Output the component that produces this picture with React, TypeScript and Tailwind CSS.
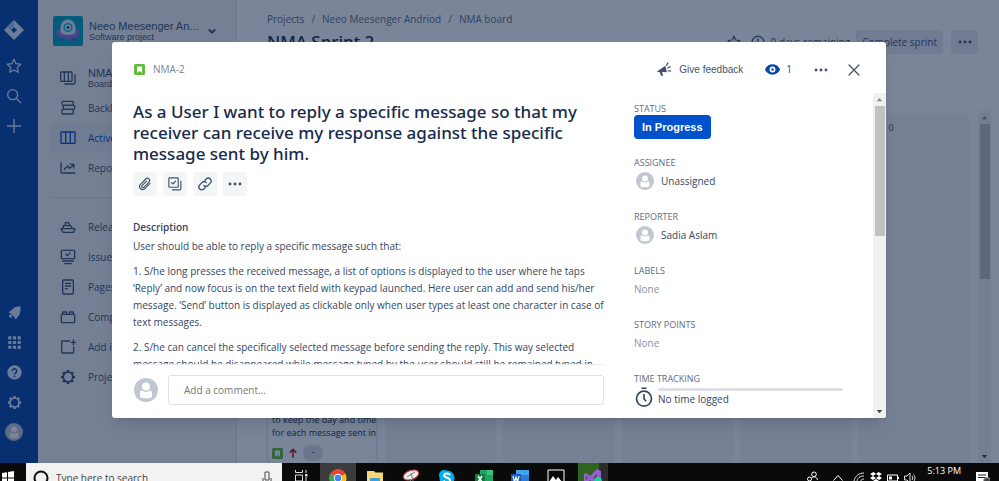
import type { ReactNode } from "react";

const stroke = {
  fill: "none",
  stroke: "currentColor",
  strokeWidth: 2,
  strokeLinecap: "round",
  strokeLinejoin: "round",
} as const;

const icons: Record<string, ReactNode> = {
  board: (
    <g {...stroke}>
      <rect x="1" y="3" width="17" height="14" rx="1" />
      <path d="M6.500 3v14M12.500 3v14M22.500 7v12a2 2 0 0 1-2 2H7" />
    </g>
  ),
  backlog: (
    <g {...stroke}>
      <rect x="3" y="2" width="17" height="6" rx="1.500" />
      <rect x="5" y="8" width="17" height="6" rx="1.500" />
      <rect x="3" y="14" width="17" height="7" rx="1.500" />
    </g>
  ),
  columns: (
    <g {...stroke}>
      <rect x="1.500" y="3" width="21" height="17" rx="1" />
      <path d="M8.500 3v17M15.500 3v17" />
    </g>
  ),
  reports: (
    <g {...stroke}>
      <path d="M1.500 4v14a1.500 1.500 0 0 0 1.500 1.500h19.500" />
      <path d="m6.500 14 5-5 3 3.500L20.500 7M15.500 6.500h5.300V12" />
    </g>
  ),
  ship: (
    <g {...stroke}>
      <path d="M1.500 14.500h21l-2 5.500H4.500zM5 14v-4h11l2.500 4M8 10V5.500h5l2 4.500" />
    </g>
  ),
  issues: (
    <g {...stroke}>
      <rect x="2" y="2" width="20" height="12.500" rx="1" />
      <path d="m9 8 2 2 4-4M4 18h16M7 22h10" />
    </g>
  ),
  page: (
    <g {...stroke}>
      <rect x="4" y="1.500" width="16" height="21" rx="1.500" />
      <path d="M8 6.500h8M8 10.500h8M8 14.500h3" />
    </g>
  ),
  component: (
    <g {...stroke}>
      <rect x="2" y="8" width="20" height="12.500" rx="1.500" />
      <path d="M4 8V5.500a1 1 0 0 1 1-1h4a1 1 0 0 1 1 1V8M14 8V5.500a1 1 0 0 1 1-1h4a1 1 0 0 1 1 1V8" />
    </g>
  ),
  addItem: (
    <g {...stroke}>
      <path d="M14 3H3.500a1 1 0 0 0-1 1v16a1 1 0 0 0 1 1h16a1 1 0 0 0 1-1v-8M20 1.500v7M16.500 5h7" />
    </g>
  ),
  gear: (
    <g>
      <circle cx="12" cy="12" r="7.200" fill="none" stroke="currentColor" strokeWidth="2.600" />
      <path
        d="M10 1.500h4V5h-4zM10 19h4v3.500h-4zM1.500 10H5v4H1.500zM19 10h3.500v4H19zM3.200 6l2.800-2.800L8.500 5.600 5.600 8.500zM15.500 5.600 18 3.200 20.800 6l-2.400 2.500zM3.200 18l2.400-2.500 2.900 2.900L6 20.800zM15.500 18.400l2.900-2.900 2.400 2.500-2.800 2.800z"
        fill="currentColor"
      />
    </g>
  ),
  star: (
    <path
      d="m12 2 3.100 6.500 7 .9-5.100 4.900 1.300 7.100L12 18l-6.300 3.400L7 14.300 1.900 9.400l7-.9z"
      {...stroke}
    />
  ),
  search: (
    <g {...stroke}>
      <circle cx="10" cy="10" r="7.500" />
      <path d="m16 16 6 6" />
    </g>
  ),
  plus: <path d="M12 1.500v21M1.500 12h21" {...stroke} strokeLinecap="butt" />,
  rocket: (
    <g fill="currentColor">
      <path d="M21.500 2C15.500 2 12 3.500 9 6.500L2.500 12l3.700 1.500 5 5L12.500 22l2 .5 5-6.500c2-4 2.500-9 2-14z" />
      <circle cx="6" cy="17.500" r="2.800" />
    </g>
  ),
  apps: (
    <path
      d="M2 2h5v5H2zM9.500 2h5v5h-5zM17 2h5v5h-5zM2 9.500h5v5H2zM9.500 9.500h5v5h-5zM17 9.500h5v5h-5zM2 17h5v5H2zM9.500 17h5v5h-5zM17 17h5v5h-5z"
      fill="currentColor"
    />
  ),
  help: (
    <g>
      <circle cx="12" cy="12" r="11.500" fill="currentColor" />
      <path d="M8.500 9.500a3.500 3.500 0 1 1 5.300 3c-1.200.7-1.800 1.300-1.800 2.500" fill="none" stroke="#0747a6" strokeWidth="2.200" />
      <circle cx="12" cy="18" r="1.400" fill="#0747a6" />
    </g>
  ),
  chevron: <path d="m8 10.500 4 4 4-4" {...stroke} strokeWidth="3" />,
  more: (
    <g fill="currentColor">
      <circle cx="3.500" cy="12" r="2.500" />
      <circle cx="12" cy="12" r="2.500" />
      <circle cx="20.500" cy="12" r="2.500" />
    </g>
  ),
  close: <path d="m3.500 3.500 17 17M20.500 3.500l-17 17" {...stroke} strokeWidth="2.200" />,
  clip: (
    <path
      d="m20.500 11-8.700 9a5.200 5.200 0 0 1-7.500-7.300l9-9.300a3.800 3.800 0 0 1 5.500 5.300l-8.800 9a2 2 0 0 1-3-2.800l7.500-7.700"
      {...stroke}
    />
  ),
  subtask: (
    <g {...stroke}>
      <rect x="1.500" y="1.500" width="16" height="16" rx="1" />
      <path d="m6 9.500 2.500 2.500L13 7M22 7v13a2 2 0 0 1-2 2H7.500" />
    </g>
  ),
  link: (
    <g {...stroke} strokeWidth="2.200">
      <path d="M10 14.500a5 5 0 0 0 7 0l4-4a4.900 4.900 0 0 0-7-7L12 5.500" />
      <path d="M14 9.500a5 5 0 0 0-7 0l-4 4a4.900 4.900 0 0 0 7 7l2-2" />
    </g>
  ),
  clock: (
    <g {...stroke}>
      <circle cx="12" cy="12" r="10" />
      <path d="M12 6v7l3 2" />
    </g>
  ),
  stopwatch: (
    <g {...stroke} strokeLinecap="butt">
      <circle cx="12" cy="14" r="9" />
      <path d="M12 8.500V14l2.500 3M9 1.500h6" />
    </g>
  ),
  feedback: (
    <g>
      <path d="M1 15.500 15 6l2.500 10.500-8-.5 2 5.500-3 1-3-6.500z" fill="currentColor" />
      <path d="M17 5.500 19 1.500M19 9.500l3.500-2M19.500 14l3.500.5" {...stroke} />
    </g>
  ),
  watch: (
    <g>
      <path d="M0 12C4 1 20 1 24 12 20 23 4 23 0 12z" fill="currentColor" />
      <circle cx="12" cy="12" r="4.700" fill="#fff" />
      <circle cx="12" cy="12" r="2" fill="currentColor" />
    </g>
  ),
};

function Icon({ name, className = "size-4" }: { name: string; className?: string }) {
  return (
    <svg viewBox="0 0 24 24" className={`shrink-0 ${className}`} aria-hidden="true">
      {icons[name]}
    </svg>
  );
}

function Avatar({ className }: { className: string }) {
  return (
    <svg viewBox="0 0 24 24" className={`shrink-0 ${className}`} aria-hidden="true">
      <circle cx="12" cy="12" r="12" fill="#c1c7d0" />
      <circle cx="12" cy="8.500" r="4" fill="#fff" />
      <path d="M6 14.500c0-1.200.8-2 2-2 1 .9 2.400 1.400 4 1.400s3-.5 4-1.400c1.200 0 2 .8 2 2V19c-1 1.700-11 1.700-12 0z" fill="#fff" />
    </svg>
  );
}

function StoryIcon() {
  return (
    <svg viewBox="0 0 11 11" className="size-[11px] shrink-0" aria-hidden="true">
      <rect width="11" height="11" rx="1.500" fill="#63ba3c" />
      <path d="M3 2.500h5V9L5.500 7 3 9z" fill="#fff" />
    </svg>
  );
}

const topLinks = [
  { icon: "star", label: "Starred" },
  { icon: "search", label: "Search" },
  { icon: "plus", label: "Create" },
];

const bottomLinks = [
  { icon: "rocket", label: "What's new" },
  { icon: "apps", label: "Apps" },
  { icon: "help", label: "Help" },
  { icon: "gear", label: "Settings" },
];

function GlobalNav() {
  return (
    <nav className="flex w-[38px] shrink-0 flex-col items-center bg-[#0747a6] pt-5 pr-2.5 pb-4 text-[#deebff]">
      <a href="#home" aria-label="Jira" className="mb-[11px]">
        <svg viewBox="0 0 20 20" className="size-5">
          <path d="M10 0 20 10 10 20 0 10z" fill="#deebff" />
          <path d="M10 0v6L6 10 3 7z" fill="#a5c2ee" />
          <path d="m10 7 3 3-3 3-3-3z" fill="#0747a6" />
        </svg>
      </a>
      {topLinks.map((l) => (
        <button key={l.label} aria-label={l.label} className="grid h-[30px] place-items-center">
          <Icon name={l.icon} />
        </button>
      ))}
      <div className="mt-auto flex flex-col items-center">
        {bottomLinks.map((l) => (
          <button key={l.label} aria-label={l.label} className="grid h-[30px] place-items-center">
            <Icon name={l.icon} className="size-[15px]" />
          </button>
        ))}
        <button aria-label="Profile" className="grid h-[30px] place-items-center">
          <Avatar className="size-[18px]" />
        </button>
      </div>
    </nav>
  );
}

const projectLinks = [
  { icon: "backlog", label: "Backlog" },
  { icon: "columns", label: "Active sprints", active: true },
  { icon: "reports", label: "Reports" },
];

const moreLinks = [
  { icon: "ship", label: "Releases" },
  { icon: "issues", label: "Issues and filters" },
  { icon: "page", label: "Pages" },
  { icon: "component", label: "Components" },
  { icon: "addItem", label: "Add item" },
  { icon: "gear", label: "Project settings" },
];

function SideLink({ icon, label, active }: { icon: string; label: string; active?: boolean }) {
  return (
    <a
      href={`#${icon}`}
      className={`flex h-[30px] items-center gap-3 rounded-sm pl-2.5 ${
        active ? "bg-[#ebecf0] text-[#0052cc]" : ""
      }`}
    >
      <Icon name={icon} />
      {label}
    </a>
  );
}

function ProjectNav() {
  return (
    <aside className="w-[199px] shrink-0 border-r border-[#dfe1e6] bg-[#f4f5f7] px-3 pt-4 text-[10px] text-[#42526e]">
      <div className="mb-4 flex h-[30px] items-center pl-[3px] font-[Liberation_Sans,sans-serif]">
        <svg viewBox="0 0 30 30" className="mr-1.5 size-[30px] shrink-0">
          <rect width="30" height="30" rx="2" fill="#00a3bf" />
          <path d="M8 25h3v-5H8zM19 25h3v-5h-3z" fill="#6554c0" />
          <ellipse cx="15" cy="17" rx="12" ry="6" fill="#8777d9" />
          <path d="M7.500 17V11a7.500 7.500 0 0 1 15 0v6c-3 2.500-12 2.500-15 0z" fill="#deebff" />
          <circle cx="15" cy="11.500" r="4.500" fill="#00b8d9" />
          <circle cx="15" cy="11.500" r="3" fill="#fff" />
          <circle cx="15" cy="11.500" r="1.500" fill="#253858" />
        </svg>
        <div className="min-w-0 flex-1 whitespace-nowrap">
          <div className="text-[11px] leading-3">Neeo Meesenger An...</div>
          <div className="text-[9px] leading-[10px]">Software project</div>
        </div>
        <button aria-label="Switch project" className="mr-1">
          <Icon name="chevron" />
        </button>
      </div>
      <a href="#nma" className="flex h-[31px] items-center gap-3 pl-2.5 font-[Liberation_Sans,sans-serif]">
        <Icon name="board" />
        <span>
          <span className="block text-[11px] leading-3">NMA board</span>
          <span className="block text-[9px] leading-[10px]">Board</span>
        </span>
      </a>
      {projectLinks.map((l) => (
        <SideLink key={l.label} {...l} />
      ))}
      <hr className="my-3.5 border-[#dfe1e6]" />
      {moreLinks.map((l) => (
        <SideLink key={l.label} {...l} />
      ))}
    </aside>
  );
}

function Scrollbar({ track, thumb }: { track: string; thumb: string }) {
  return (
    <div className={`flex w-[13px] shrink-0 flex-col items-center ${track}`} aria-hidden="true">
      <svg viewBox="0 0 12 12" className="size-[13px] shrink-0">
        <path d="m3.500 7.500 2.500-3 2.500 3z" fill="#8a8a8a" />
      </svg>
      <div className={`w-2.5 ${thumb}`} />
      <svg viewBox="0 0 12 12" className="mt-auto size-[13px] shrink-0">
        <path d="m3.500 4.500 2.500 3 2.500-3z" fill="#404040" />
      </svg>
    </div>
  );
}

function Board() {
  return (
    <main className="flex min-w-0 flex-1 flex-col pt-3 text-[10px] text-[#42526e]">
      <nav className="flex h-3.5 items-center gap-[7px] pl-[30px] text-[#5e6c84]">
        <a href="#projects">Projects</a>
        <span>/</span>
        <a href="#project">Neeo Meesenger Andriod</a>
        <span>/</span>
        <a href="#board">NMA board</a>
      </nav>
      <header className="mt-1 flex h-6 items-center pr-[21px] pl-[30px]">
        <h1 className="mr-auto font-[Noto_Sans,sans-serif] text-[17px] font-medium text-[#172b4d]">NMA Sprint 2</h1>
        <Icon name="star" className="mr-2.5 size-3.5" />
        <Icon name="clock" className="mr-1.5 size-3.5" />
        <span>0 days remaining</span>
        <button className="ml-1.5 h-6 rounded-sm bg-[#ebecf0] px-1.5">Complete sprint</button>
        <button aria-label="More" className="ml-2 grid h-6 w-[27px] place-items-center rounded-sm bg-[#ebecf0]">
          <Icon name="more" className="size-3.5" />
        </button>
      </header>
      <div className="mt-[57px] flex min-h-0 flex-1 pr-2 pl-[29px]">
        <div className="mt-1 grid min-w-0 flex-1 grid-cols-6 gap-[7px]">
          <section className="flex flex-col overflow-hidden rounded-sm bg-[#f4f5f7] px-0.5">
            <article className="mt-auto rounded-sm bg-white px-1 pt-2 pb-0.5 text-[9px] leading-[13px] whitespace-nowrap text-[#172b4d] shadow">
              <p>
                to keep the day and time
                <br />
                for each message sent in
              </p>
              <div className="mt-1.5 flex items-center gap-1.5">
                <StoryIcon />
                <svg viewBox="0 0 10 12" className="h-2.5 w-2">
                  <path d="M5 12V1.500M1 5.500l4-4 4 4" fill="none" stroke="#cd1316" strokeWidth="2" />
                </svg>
                <span className="h-4 w-5 rounded-full bg-[#dfe1e6] text-center">-</span>
              </div>
            </article>
          </section>
          <section className="rounded-sm bg-[#f4f5f7]" />
          <section className="rounded-sm bg-[#f4f5f7]" />
          <section className="rounded-sm bg-[#f4f5f7]" />
          <section className="rounded-sm bg-[#f4f5f7]" />
          <section className="rounded-sm bg-[#f4f5f7] pt-1.5 pl-[30px] text-[9px]">0</section>
        </div>
        <div className="ml-2 flex">
          <Scrollbar track="bg-[#f1f1f1]" thumb="h-[44%] bg-[#c1c1c1]" />
        </div>
      </div>
    </main>
  );
}

const tools = [
  { icon: "clip", label: "Attach" },
  { icon: "subtask", label: "Create subtask" },
  { icon: "link", label: "Link issue" },
  { icon: "more", label: "More" },
];

function Field({ label, children }: { label: string; children: ReactNode }) {
  return (
    <div className="h-[54px]">
      <dt className="text-[9px] leading-[13px] font-medium text-[#5e6c84] uppercase">{label}</dt>
      <dd className="flex h-6 items-center">{children}</dd>
    </div>
  );
}

function IssueDialog() {
  return (
    <div
      role="dialog"
      aria-labelledby="issue-title"
      className="flex min-w-0 flex-1 flex-col overflow-hidden rounded-[3px] bg-white text-[10px] text-[#344563] shadow-lg"
    >
      <header className="flex h-[51px] shrink-0 items-center pt-1 pr-[25px] pl-[22px] text-[#42526e]">
        <StoryIcon />
        <a href="#NMA-2" className="mr-auto ml-2 text-[#7a869a]">
          NMA-2
        </a>
        <button className="flex items-center gap-2 font-[Liberation_Sans,sans-serif]">
          <Icon name="feedback" className="size-[15px]" />
          Give feedback
        </button>
        <button className="ml-[22px] flex items-center gap-1.5 text-[#0747a6]">
          <Icon name="watch" className="size-[15px]" />1
        </button>
        <button aria-label="Actions" className="ml-[22px]">
          <Icon name="more" className="size-3.5" />
        </button>
        <button aria-label="Close" className="ml-[19px]">
          <Icon name="close" className="size-3.5" />
        </button>
      </header>
      <div className="flex min-h-0 flex-1">
        <div className="flex min-w-0 flex-1 flex-col pl-[21px]">
          <div className="-mr-3 min-h-0 flex-1 overflow-hidden whitespace-nowrap">
            <h2
              id="issue-title"
              className="mt-2 font-[Noto_Sans,sans-serif] text-[17px] leading-[21px] font-medium text-[#172b4d]"
            >
              As a User I want to reply a specific message so that my
              <br />
              receiver can receive my response against the specific
              <br />
              message sent by him.
            </h2>
            <div className="mt-2 flex gap-1.5 text-[#42526e]">
              {tools.map((t) => (
                <button
                  key={t.label}
                  aria-label={t.label}
                  className="grid size-6 place-items-center rounded-[3px] bg-[#f4f5f7]"
                >
                  <Icon name={t.icon} className="size-3.5" />
                </button>
              ))}
            </div>
            <h3 className="mt-[23px] leading-[17px] font-semibold">Description</h3>
            <div className="mt-0.5 leading-[17px]">
              <p>User should be able to reply a specific message such that:</p>
              <p className="mt-2">
                1. S/he long presses the received message, a list of options is displayed to the user where he taps
                <br />
                ‘Reply’ and now focus is on the text field with keypad launched. Here user can add and send his/her
                <br />
                message. ‘Send’ button is displayed as clickable only when user types at least one character in case of
                <br />
                text messages.
              </p>
              <p className="mt-2">
                2. S/he can cancel the specifically selected message before sending the reply. This way selected
                <br />
                message should be disappeared while message typed by the user should still be remained typed in
              </p>
            </div>
          </div>
          <div className="flex shrink-0 items-center border-t border-[#ebecf0] pt-2.5 pb-[13px]">
            <Avatar className="mr-2.5 ml-px size-6" />
            <input
              aria-label="Add a comment"
              placeholder="Add a comment..."
              className="h-[30px] min-w-0 flex-1 rounded-[3px] border border-[#dfe1e6] px-[15px] placeholder:text-[#777]"
            />
          </div>
        </div>
        <dl className="w-[269px] shrink-0 overflow-hidden px-[30px] pt-[9px]">
          <Field label="Status">
            <button className="h-6 rounded-sm bg-[#0052cc] px-2 font-[Liberation_Sans,sans-serif] text-[11px] font-bold text-white">
              In Progress
            </button>
          </Field>
          <Field label="Assignee">
            <Avatar className="mr-[7px] ml-0.5 size-[18px]" />
            Unassigned
          </Field>
          <Field label="Reporter">
            <Avatar className="mr-[7px] ml-0.5 size-[18px]" />
            Sadia Aslam
          </Field>
          <Field label="Labels">
            <span className="text-[#8993a4]">None</span>
          </Field>
          <Field label="Story points">
            <span className="text-[#8993a4]">None</span>
          </Field>
          <Field label="Time tracking">
            <Icon name="stopwatch" className="mr-1 size-5" />
            <div className="flex-1">
              <div className="h-[3px] rounded-sm bg-[#dfe1e6]" />
              <div className="leading-4">No time logged</div>
            </div>
          </Field>
        </dl>
        <Scrollbar track="bg-[#f1f1f1]" thumb="h-[40%] bg-[#c1c1c1]" />
      </div>
    </div>
  );
}

const pinned: { name: string; tile?: string; art: ReactNode }[] = [
  {
    name: "Chrome",
    tile: "bg-[#3c3c3c]",
    art: (
      <>
        <circle cx="9" cy="9" r="8.500" fill="#fbc116" />
        <path d="M9 9 1.600 4.800A8.500 8.500 0 0 1 16.400 4.800z" fill="#ea4335" />
        <path d="M9 9 1.600 4.800A8.500 8.500 0 0 0 9 17.500z" fill="#34a853" />
        <circle cx="9" cy="9" r="4.200" fill="#fff" />
        <circle cx="9" cy="9" r="3.300" fill="#4285f4" />
      </>
    ),
  },
  {
    name: "File Explorer",
    art: (
      <>
        <path d="M1 2h7l1.500 1.500H17V16H1z" fill="#f8d775" />
        <path d="M4 9h10v7H4z" fill="#3f9fe0" />
      </>
    ),
  },
  {
    name: "Snipping Tool",
    art: (
      <>
        <ellipse cx="9" cy="6" rx="8" ry="4.500" transform="rotate(-20 9 6)" fill="#eee" stroke="#c8383c" />
        <path d="m5 8 8-5M9 4l2 8 4 3M10 10l-5 5" fill="none" stroke="#777" />
      </>
    ),
  },
  {
    name: "Skype",
    art: (
      <>
        <circle cx="6" cy="6" r="5" fill="#00aff0" />
        <circle cx="9" cy="9" r="7.500" fill="#00aff0" />
        <path d="M12 6.200C11 4 6.200 4 6.200 6.500S12 8.500 12 11.200 6.500 14 5.800 11.500" fill="none" stroke="#fff" strokeWidth="2" />
      </>
    ),
  },
  {
    name: "Excel",
    art: (
      <>
        <path d="M5 1h13v16H5z" fill="#21a366" />
        <path d="M12 1h6v5h-6z" fill="#33c481" />
        <path d="M0 5h10v10H0z" fill="#107c41" />
        <path d="m3 7 4 6M7 7l-4 6" stroke="#fff" strokeWidth="1.500" />
      </>
    ),
  },
  {
    name: "Word",
    art: (
      <>
        <path d="M5 1h13v16H5z" fill="#2b7cd3" />
        <path d="M5 1h13v5H5z" fill="#41a5ee" />
        <path d="M0 5h10v10H0z" fill="#185abd" />
        <path d="m2 7 1.500 6L5 8l1.500 5L8 7" fill="none" stroke="#fff" strokeWidth="1.200" />
      </>
    ),
  },
  {
    name: "Photos",
    art: (
      <>
        <path d="M1 1h16v15H1z" fill="none" stroke="#fff" />
        <path d="m2 13 4-6 3 4 2-3 5 6v2H2z" fill="#fff" />
      </>
    ),
  },
  {
    name: "Visual Studio",
    tile: "mx-[3px] bg-linear-to-r from-[#30631f] from-70% to-[#2b2b2b] to-70%",
    art: (
      <>
        <path d="M13 0 17 2v14l-4 2L6 11l-4 3-2-1V5l2-1 4 3zM13 5 9 9l4 4zM2 7v4l2-2z" fill="#9a5bd8" />
        <circle cx="14" cy="12" r="4" fill="#1fc8a9" />
      </>
    ),
  },
];

function Taskbar() {
  return (
    <footer className="h-[18px] shrink-0 overflow-hidden bg-[#0a0a0a] text-white">
      <div className="flex h-[30px] items-center">
        <button aria-label="Start" className="w-[26px] pl-0.5">
          <svg viewBox="0 0 12 14" className="h-3.5 w-3">
            <path d="M0 2l5-.8v5.300H0zM6 1l6-1v6.500H6zM0 7.500h5v5.300L0 12zM6 7.500h6V14l-6-1z" fill="#fff" />
          </svg>
        </button>
        <label className="flex h-full w-64 items-center bg-[#f2f2f2] pl-[7px]">
          <svg viewBox="0 0 16 16" className="mr-[7px] size-4 shrink-0">
            <circle cx="8" cy="8" r="6.500" fill="none" stroke="#111" strokeWidth="2" />
          </svg>
          <input
            aria-label="Search"
            placeholder="Type here to search"
            className="min-w-0 flex-1 text-[10px] placeholder:text-[#444]"
          />
          <svg viewBox="0 0 10 16" className="mr-2.5 h-4 w-2.5 shrink-0">
            <path d="M3 2h4v8H3zM1 8v4h8V8M5 12v4" fill="none" stroke="#444" />
          </svg>
        </label>
        <button aria-label="Task view" className="grid w-[38px] place-items-center">
          <svg viewBox="0 0 14 16" className="h-4 w-3.5">
            <path d="M1.500 0v2.500h7V0M1.500 5h7v6h-7zM1.500 16v-2.500h7V16M12 0v3M12 7v9" fill="none" stroke="#ddd" />
            <path d="M11 4h2.500v2.500H11z" fill="#ddd" />
          </svg>
        </button>
        <div className="grid h-full w-[291px] grid-cols-8">
          {pinned.map((p) => (
            <button key={p.name} aria-label={p.name} className={`grid place-items-center ${p.tile ?? ""}`}>
              <svg viewBox="0 0 18 18" className="size-[18px]">
                {p.art}
              </svg>
            </button>
          ))}
        </div>
        <div className="ml-auto flex h-full items-center gap-[5px] pr-[9px]">
          <svg viewBox="0 0 14 14" className="mr-2 size-3.5">
            <path d="M4.500 6a2 2 0 1 1 0 4 2 2 0 0 1 0-4zM9 1a2.300 2.300 0 1 1 0 4.600A2.300 2.300 0 0 1 9 1zM1 14c0-5 7-5 7 0M6.500 7C9 5 12 6 12.500 9" fill="none" stroke="#fff" />
          </svg>
          <svg viewBox="0 0 12 12" className="mr-1 size-3">
            <path d="m1.500 8.500 4.500-5 4.500 5" fill="none" stroke="#fff" />
          </svg>
          <svg viewBox="0 0 12 12" className="size-3">
            <path d="M1 9C2 4 6 1 11 1M4 10c0-4 3-6 7-6M7 11c0-2 1.500-4 4-4" fill="none" stroke="#ddd" />
          </svg>
          <svg viewBox="0 0 12 12" className="size-3">
            <path d="m3.500 0 2.500 2-3 2-3-2zM8.500 0 12 2 9 4 6 2zM0 6l3-2 3 2-3 2zM12 6 9 4 6 6l3 2zM3 9l3-2 3 2-3 2z" fill="#fff" />
          </svg>
          <svg viewBox="0 0 12 12" className="size-3">
            <path d="M.5 3h10v6H.5z" fill="none" stroke="#fff" />
            <path d="M2 4.500h3v3H2zM11 5h1v2h-1z" fill="#fff" />
          </svg>
          <svg viewBox="0 0 12 12" className="size-3">
            <path d="M.5 4H3l3-3v10L3 8H.5zM8 4c1 1 1 3 0 4M9.500 2.500c2 2 2 5 0 7" fill="none" stroke="#ddd" />
          </svg>
          <time className="ml-1.5 self-start text-[9px] leading-4 whitespace-nowrap">5:13 PM</time>
          <svg viewBox="0 0 14 14" className="ml-2.5 size-3.5">
            <path d="M0 1h12v10H5l-2.500 2.500V11H0z" fill="#fff" />
            <path d="M2 4h8M2 6.500h8" stroke="#222" />
            <circle cx="11" cy="10" r="3.500" fill="#444" stroke="#aaa" />
          </svg>
        </div>
      </div>
    </footer>
  );
}

export default function App() {
  return (
    <div className="flex h-screen flex-col overflow-hidden bg-white font-[Open_Sans,sans-serif]">
      <div className="relative flex min-h-0 flex-1">
        <GlobalNav />
        <ProjectNav />
        <Board />
        <div className="absolute inset-0 flex bg-[#091e42]/54 pt-[42px] pr-[113px] pb-[45px] pl-28">
          <IssueDialog />
        </div>
      </div>
      <Taskbar />
    </div>
  );
}
